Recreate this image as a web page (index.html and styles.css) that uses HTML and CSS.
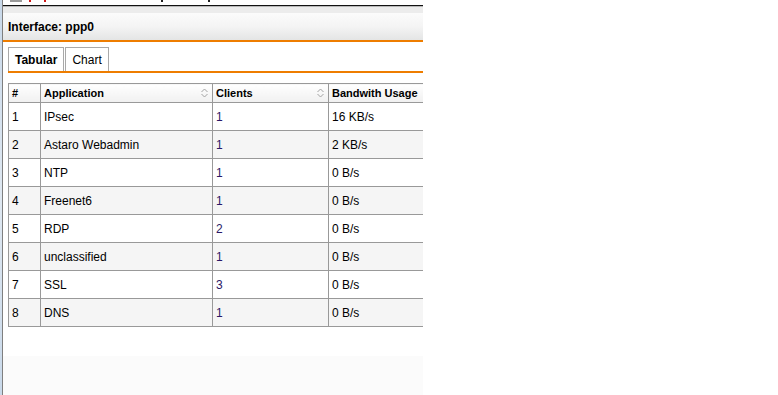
FILE: index.html
```html
<!DOCTYPE html>
<html>
<head>
<meta charset="utf-8">
<link rel="stylesheet" href="styles.css">
</head>
<body>
<div class="page">
  <div class="edge"></div>
  <div class="panel">
    <div class="cutoff">
      <span class="bit bit-gray"></span>
      <span class="bit bit-red bit-a"></span>
      <span class="bit bit-red bit-b"></span>
      <span class="bit bit-dark bit-c"></span>
      <span class="bit bit-dark bit-d"></span>
    </div>
    <div class="rule"></div>
    <div class="band"></div>
    <div class="title">Interface: ppp0</div>
    <div class="tabs">
      <div class="tab active">Tabular</div>
      <div class="tab">Chart</div>
    </div>
    <div class="tablewrap">
      <table class="grid">
        <colgroup>
          <col class="c-num"><col class="c-app"><col class="c-cli"><col class="c-bw">
        </colgroup>
        <thead>
          <tr>
            <th>#</th>
            <th><div class="th-in"><span>Application</span><svg class="sort" width="7" height="10" viewBox="0 0 7 10"><path d="M0.5 4 L3.5 1 L6.5 4 M0.5 6 L3.5 9 L6.5 6" fill="none" stroke="#a2a2a2" stroke-width="1"/></svg></div></th>
            <th><div class="th-in"><span>Clients</span><svg class="sort" width="7" height="10" viewBox="0 0 7 10"><path d="M0.5 4 L3.5 1 L6.5 4 M0.5 6 L3.5 9 L6.5 6" fill="none" stroke="#a2a2a2" stroke-width="1"/></svg></div></th>
            <th><div class="th-in"><span>Bandwith Usage</span></div></th>
          </tr>
        </thead>
        <tbody>
          <tr><td>1</td><td>IPsec</td><td class="cli">1</td><td>16 KB/s</td></tr>
          <tr class="alt"><td>2</td><td>Astaro Webadmin</td><td class="cli">1</td><td>2 KB/s</td></tr>
          <tr><td>3</td><td>NTP</td><td class="cli">1</td><td>0 B/s</td></tr>
          <tr class="alt"><td>4</td><td>Freenet6</td><td class="cli">1</td><td>0 B/s</td></tr>
          <tr><td>5</td><td>RDP</td><td class="cli">2</td><td>0 B/s</td></tr>
          <tr class="alt"><td>6</td><td>unclassified</td><td class="cli">1</td><td>0 B/s</td></tr>
          <tr><td>7</td><td>SSL</td><td class="cli">3</td><td>0 B/s</td></tr>
          <tr class="alt"><td>8</td><td>DNS</td><td class="cli">1</td><td>0 B/s</td></tr>
        </tbody>
      </table>
    </div>
    <div class="spacer"></div>
    <div class="footer"></div>
  </div>
</div>
</body>
</html>
```

FILE: styles.css
```css
html, body {
  margin: 0;
  padding: 0;
  background: #ffffff;
}
body {
  font-family: "Liberation Sans", Arial, sans-serif;
  font-size: 12px;
  color: #000;
}
.page {
  display: flex;
  height: 395px;
  overflow: hidden;
}
.edge {
  width: 2px;
  background: linear-gradient(to bottom, #c9d9ea, #dfe8f1 50%, #c9d9ea);
  border-right: 1px solid #7f7f7f;
  flex: none;
}
.panel {
  width: 420px;
  flex: none;
  display: flex;
  flex-direction: column;
  overflow: hidden;
}
.cutoff {
  height: 5px;
  position: relative;
  background: #ffffff;
}
.bit {
  position: absolute;
  top: 0;
  height: 2px;
}
.bit-gray { left: 7px; width: 12px; background: #9a9a9a; }
.bit-red { width: 2px; background: #d01818; }
.bit-a { left: 26px; }
.bit-b { left: 41px; }
.bit-dark { width: 2px; background: #202020; }
.bit-c { left: 158px; }
.bit-d { left: 205px; }
.rule {
  height: 1px;
  background: #111111;
  border-bottom: 1px solid #b8b8b8;
}
.band {
  height: 6px;
  background: #ececec;
}
.title {
  height: 27px;
  line-height: 28px;
  padding-left: 5px;
  font-weight: bold;
  font-size: 12px;
  background: linear-gradient(to bottom, #fbfbfb, #f4f4f4 50%, #e4e5e5);
  border-bottom: 2px solid #ee7d00;
}
.tabs {
  display: flex;
  gap: 1px;
  margin: 5px 0 0 5px;
  border-bottom: 2px solid #ee7d00;
}
.tab {
  height: 23px;
  line-height: 24px;
  padding: 0 6px;
  border: 1px solid #a9a9a9;
  border-bottom: none;
  background: #ffffff;
  font-size: 12px;
}
.tab.active {
  font-weight: bold;
}
.tablewrap {
  margin: 10px 0 0 5px;
  overflow: hidden;
}
.grid {
  border-collapse: collapse;
  width: 440px;
  table-layout: fixed;
}
.c-num { width: 32px; }
.c-app { width: 172px; }
.c-cli { width: 116px; }
.c-bw { width: 120px; }
.grid th {
  height: 18px;
  padding: 0 0 0 3px;
  text-align: left;
  font-size: 11px;
  font-weight: bold;
  border: 1px solid #999999;
  background: linear-gradient(to bottom, #ffffff, #f0f0f0);
  white-space: nowrap;
}
.th-in {
  display: flex;
  justify-content: space-between;
  align-items: center;
}
.sort {
  display: block;
  margin-right: 4px;
}
.grid td {
  height: 27px;
  padding: 0 0 0 3px;
  border: 1px solid #999999;
  font-size: 12px;
  white-space: nowrap;
}
.grid tr.alt td {
  background: #f5f5f5;
}
.grid td.cli {
  color: #2a1866;
}
.spacer {
  height: 29px;
}
.footer {
  flex: 1;
  background: #fbfbfb;
}
```
